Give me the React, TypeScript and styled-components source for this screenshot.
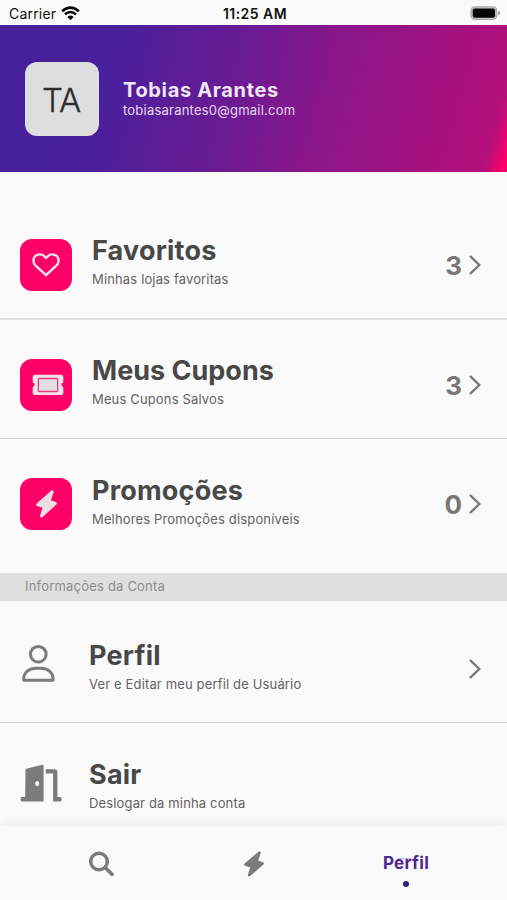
import React from "react";
import styled, { createGlobalStyle } from "styled-components";

const Global = createGlobalStyle`
  * { box-sizing: border-box; }
  body { margin: 0; background: #fafafa; font-family: Inter, "Liberation Sans", sans-serif; }
  svg { display: block; flex: none; }
`;

const Screen = styled.div`
  width: 507px;
  height: 900px;
  display: flex;
  flex-direction: column;
  overflow: hidden;
  background: #fafafa;
`;

const StatusBar = styled.div`
  height: 25px;
  flex: none;
  display: grid;
  grid-template-columns: 1fr auto 1fr;
  align-items: center;
  padding: 2px 6px 0 9px;
  color: #111;
`;

const Carrier = styled.div`
  display: flex;
  align-items: center;
  gap: 5px;
  font-size: 14px;
  line-height: 20px;
  letter-spacing: 0.2px;
`;

const Clock = styled.div`
  font-size: 14px;
  line-height: 20px;
  font-weight: 600;
  letter-spacing: 0.45px;
`;

const Battery = styled.div`
  justify-self: end;
`;

const Header = styled.header`
  height: 147px;
  flex: none;
  display: flex;
  align-items: center;
  gap: 24px;
  padding: 0 25px;
  background: linear-gradient(106deg, #47209c 0%, #48209c 21%, #6a1b93 46%, #8a168a 63%, #b40f7b 95.5%, #fa0269 99%, #ff0068 100%);
`;

const Avatar = styled.div`
  width: 74px;
  height: 74px;
  border-radius: 12px;
  background: #dedede;
  color: #2e2e2e;
  display: flex;
  align-items: center;
  justify-content: center;
  padding: 2px 2px 0 0;
  font-size: 33px;
  font-weight: 300;
  letter-spacing: -1.2px;
  -webkit-text-stroke: 0.3px #2e2e2e;
`;

const UserName = styled.div`
  color: #f1e6f8;
  font-size: 20px;
  line-height: 22px;
  padding-top: 1px;
  font-weight: 700;
  letter-spacing: 0.65px;
`;

const UserMail = styled.div`
  color: #e9d8f2;
  font-size: 13px;
  line-height: 18px;
  letter-spacing: 0.22px;
`;

const Row = styled.div<{ $height: number; $top: number; $line?: string }>`
  height: ${(p) => p.$height}px;
  flex: none;
  display: flex;
  align-items: flex-start;
  padding: ${(p) => p.$top}px 26px 0 20px;
  border-bottom: ${(p) => p.$line ?? "none"};
`;

const IconTile = styled.div`
  width: 52px;
  height: 52px;
  flex: none;
  border-radius: 12px;
  background: #ff0068;
  display: flex;
  align-items: center;
  justify-content: center;
`;

const PlainIcon = styled.div`
  width: 49px;
  height: 42px;
  flex: none;
  display: flex;
  align-items: center;
`;

const Labels = styled.div<{ $shift?: number }>`
  flex: 1;
  margin-left: 20px;
  margin-top: ${(p) => -5 + (p.$shift ?? 0)}px;
`;

const Title = styled.div<{ $spacing?: number }>`
  color: #484848;
  font-size: 27px;
  line-height: 34px;
  font-weight: 700;
  letter-spacing: ${(p) => p.$spacing ?? 0.2}px;
`;

const Subtitle = styled.div`
  color: #636363;
  font-size: 13px;
  line-height: 18px;
  margin-top: 2px;
  letter-spacing: 0.15px;
`;

const Trailing = styled.div`
  height: 52px;
  display: flex;
  align-items: center;
  gap: 6px;
  color: #777;
  font-size: 26px;
  font-weight: 700;
`;

const Band = styled.div`
  height: 28px;
  flex: none;
  padding-left: 25px;
  background: #e0e0e0;
  color: #8b8b8b;
  font-size: 13px;
  line-height: 27px;
  letter-spacing: 0.2px;
`;

const TabBar = styled.nav`
  height: 74px;
  flex: none;
  display: grid;
  grid-template-columns: 152px 1fr 152px;
  padding: 0 25px;
  background: #fafafa;
  box-shadow: 0 -3px 10px rgba(0, 0, 0, 0.055);
`;

const Tab = styled.div`
  height: 76px;
  display: flex;
  align-items: center;
  justify-content: center;
`;

const ActiveTab = styled.div`
  display: flex;
  flex-direction: column;
  align-items: center;
  padding-top: 26px;
`;

const ActiveLabel = styled.div`
  position: relative;
  color: #4f2593;
  font-size: 17px;
  line-height: 23px;
  font-weight: 700;
  letter-spacing: 0.3px;

  &::after {
    content: "";
    position: absolute;
    left: 15px;
    top: 6px;
    width: 14px;
    height: 1px;
    background: #a9a2b4;
    opacity: 0.7;
  }
`;

const Dot = styled.div`
  width: 6px;
  height: 6px;
  margin-top: 6px;
  border-radius: 50%;
  background: #30207f;
`;

const Wifi = () => (
  <svg width="19" height="15" viewBox="0 0 19 15" fill="none" stroke="#080808">
    <path d="M1.1 5.3Q9.5-2.1 17.9 5.3" strokeWidth="2.5" />
    <path d="M4 8.4Q9.5 3.5 15 8.4" strokeWidth="2.4" />
    <path d="M6.4 11Q9.5 8.2 12.6 11L9.5 14.2Z" fill="#080808" stroke="none" />
  </svg>
);

const BatteryIcon = () => (
  <svg width="31" height="15" viewBox="0 0 31 15">
    <rect x="1.1" y=".8" width="25.6" height="12.6" rx="3.6" fill="#ccc" stroke="#aaa" strokeWidth="1.2" />
    <rect x="2.7" y="2.4" width="22.4" height="9.4" rx="2" fill="#050505" />
    <path d="M28 4.8Q30.3 5.5 30.3 7.1T28 9.4Z" fill="#aaa" />
  </svg>
);

const Heart = () => (
  <svg width="28" height="24" viewBox="0 0 28 24" fill="none" stroke="#f1e3ea" strokeWidth="2.4" strokeLinejoin="round">
    <path d="M14 22.2L3.4 12.4C.9 9.8.9 5.4 3.1 3.2C5.7.8 9.8.8 12.1 3.1L14 5L15.9 3.1C18.2.8 22.3.8 24.9 3.2C27.1 5.4 27.1 9.8 24.6 12.4Z" />
  </svg>
);

const Ticket = () => (
  <svg width="35" height="22" viewBox="-3 0 35 22">
    <path d="M3.2.8H28.8A2.5 2.5 0 0 1 31.3 3.3V8.2A2.7 2.7 0 0 0 31.3 13.3V18.5A2.5 2.5 0 0 1 28.8 21H3.2A2.5 2.5 0 0 1 .7 18.5V13.3A2.7 2.7 0 0 0 .7 8.2V3.3A2.5 2.5 0 0 1 3.2.8Z" fill="#f2e4eb" />
    <rect x="6.4" y="4.5" width="19.2" height="13" rx=".8" fill="#e4dfe2" stroke="#e83d7d" strokeWidth="1.3" />
  </svg>
);

const Bolt = ({ color, width = 21, height = 28 }: { color: string; width?: number; height?: number }) => (
  <svg width={width} height={height} viewBox="0 0 20 28" preserveAspectRatio="none">
    <path d="M15.4 1.8L1.6 14.6L8 16.9L5.3 26L18.4 13.4L12.4 11Z" fill={color} stroke={color} strokeWidth="2.9" strokeLinejoin="round" />
  </svg>
);

const Chevron = () => (
  <svg width="13" height="22" viewBox="0 0 13 22" fill="none" stroke="#777" strokeWidth="2.3" strokeLinecap="round">
    <path d="M2.6 2.6L11.3 11L2.6 19.4" />
  </svg>
);

const Person = () => (
  <svg width="36" height="40" viewBox="0 0 36 40" fill="none" stroke="#7b7b7b" strokeWidth="3">
    <circle cx="18.3" cy="10.2" r="7.8" />
    <path d="M3.7 36.2H33.1C33.5 28.5 28 24.2 21 24.2H16C8.8 24.2 3.2 28.5 3.7 36.2Z" strokeLinejoin="round" />
  </svg>
);

const Door = () => (
  <svg width="42" height="40" viewBox="0 0 42 40">
    <path d="M5.5 5L22 .8Q23.6 .5 23.6 2.2V37.5H2Q.7 37.5 .7 36.3V34.3Q.7 33.1 2 33.1H5.2Z" fill="#7b7b7b" />
    <ellipse cx="17.2" cy="19.4" rx="2" ry="2.5" fill="#fafafa" />
    <path d="M25.7 5.2H34.5Q37.4 5.2 37.4 8V33.1H40.2Q41.5 33.1 41.5 34.3V36.3Q41.5 37.5 40.2 37.5H33.1V9.6H25.7Z" fill="#7b7b7b" />
  </svg>
);

const Search = () => (
  <svg width="26" height="26" viewBox="0 0 26 26" fill="none" stroke="#7b7b7b">
    <circle cx="11" cy="10.5" r="8.3" strokeWidth="3.5" />
    <path d="M17.3 16.7L24 23.3" strokeWidth="3.7" strokeLinecap="round" />
  </svg>
);

type ShortcutProps = {
  title: string;
  text: string;
  count: number;
  icon: React.ReactNode;
  height: number;
  top: number;
  line?: string;
  spacing?: number;
  shift?: number;
};

const Shortcut = ({ title, text, count, icon, height, top, line, spacing, shift }: ShortcutProps) => (
  <Row $height={height} $top={top} $line={line}>
    <IconTile>{icon}</IconTile>
    <Labels $shift={shift}>
      <Title $spacing={spacing}>{title}</Title>
      <Subtitle>{text}</Subtitle>
    </Labels>
    <Trailing>{count}<Chevron /></Trailing>
  </Row>
);

export default function App() {
  return (
    <Screen>
      <Global />
      <StatusBar>
        <Carrier>Carrier <Wifi /></Carrier>
        <Clock>11:25 AM</Clock>
        <Battery><BatteryIcon /></Battery>
      </StatusBar>
      <Header>
        <Avatar>TA</Avatar>
        <div>
          <UserName>Tobias Arantes</UserName>
          <UserMail>tobiasarantes0@gmail.com</UserMail>
        </div>
      </Header>
      <Shortcut title="Favoritos" text="Minhas lojas favoritas" count={3} icon={<Heart />} height={148} top={67} line="2px solid #e0e0e0" />
      <Shortcut title="Meus Cupons" text="Meus Cupons Salvos" count={3} icon={<Ticket />} height={119} top={39} line="1px solid #d5d5d5" spacing={0} />
      <Shortcut title="Promoções" text="Melhores Promoções disponíveis" count={0} icon={<Bolt color="#ebdfe5" />} height={134} top={39} shift={1} />
      <Band>Informações da Conta</Band>
      <Row $height={122} $top={42} $line="1px solid #d0d0d0">
        <PlainIcon><Person /></PlainIcon>
        <Labels $shift={1}>
          <Title>Perfil</Title>
          <Subtitle>Ver e Editar meu perfil de Usuário</Subtitle>
        </Labels>
        <Trailing><Chevron /></Trailing>
      </Row>
      <Row $height={103} $top={40}>
        <PlainIcon><Door /></PlainIcon>
        <Labels>
          <Title>Sair</Title>
          <Subtitle>Deslogar da minha conta</Subtitle>
        </Labels>
      </Row>
      <TabBar>
        <Tab><Search /></Tab>
        <Tab><Bolt color="#7b7b7b" width={20} height={26} /></Tab>
        <ActiveTab>
          <ActiveLabel>Perfil</ActiveLabel>
          <Dot />
        </ActiveTab>
      </TabBar>
    </Screen>
  );
}
